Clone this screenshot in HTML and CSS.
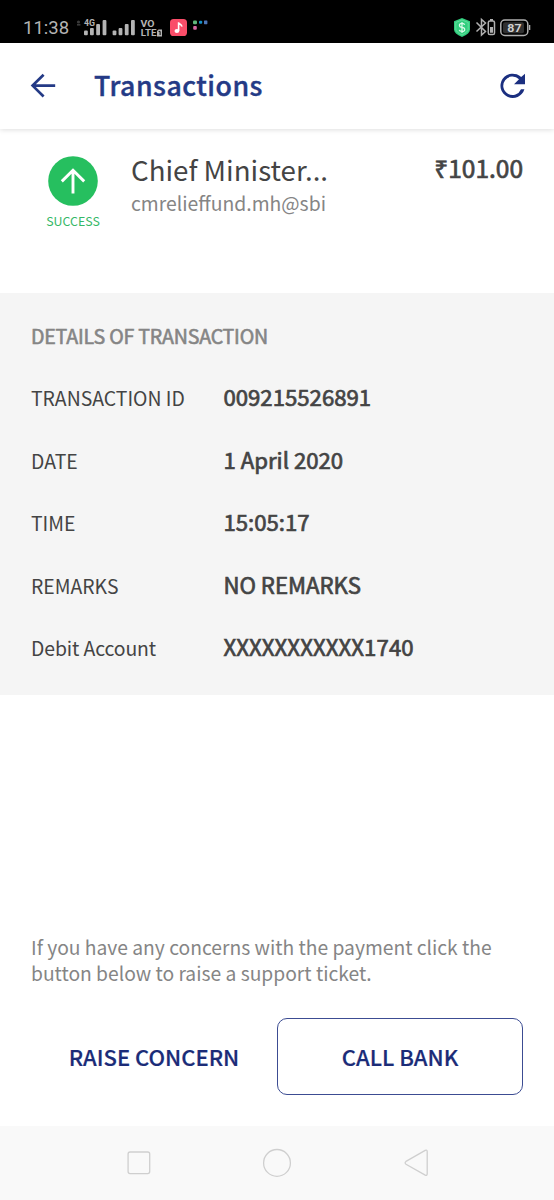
FILE: index.html
```html
<!DOCTYPE html>
<html lang="en">
<head>
<meta charset="utf-8">
<title>Transactions</title>
<link rel="stylesheet" href="styles.css">
</head>
<body>
<div class="screen">
  <div class="status-bar">
    <span class="clock">11:38</span>
    <svg class="status-left" width="140" height="30" viewBox="70 12 140 30">
      <g fill="#3a3a3a"><circle cx="78.5" cy="22" r="1.6"/><rect x="77" y="24" width="3.4" height="1.6"/></g>
      <g fill="#b4b4b4">
        <text class="tiny" x="84" y="26" font-size="8.8" textLength="11" lengthAdjust="spacingAndGlyphs">4G</text>
        <rect x="84" y="30.5" width="3.8" height="4.8" rx="1"/><rect x="90" y="28" width="3.8" height="7.3" rx="1"/><rect x="96.2" y="24" width="3.8" height="11.3" rx="1"/><rect x="102.6" y="20" width="3.8" height="15.3" rx="1"/>
        <rect x="112.6" y="30.5" width="3.8" height="4.8" rx="1"/><rect x="118.6" y="28" width="3.8" height="7.3" rx="1"/><rect x="124.8" y="24" width="3.8" height="11.3" rx="1"/><rect x="131" y="20" width="3.8" height="15.3" rx="1"/>
        <text class="tiny" x="140.6" y="27" font-size="9.4" textLength="14" lengthAdjust="spacingAndGlyphs">VO</text>
        <text class="tiny" x="140.8" y="36.4" font-size="9.4" textLength="15.6" lengthAdjust="spacingAndGlyphs">LTE</text>
        <path d="M158.5 29.5H162V36.5H157V31Z"/><path d="M158.6 31.4H160.1V35" fill="none" stroke="#000" stroke-width="1"/>
      </g>
      <rect x="170" y="19" width="17" height="17" rx="3.6" fill="#fa4d69"/>
      <ellipse cx="176.9" cy="31" rx="2.4" ry="1.9" fill="#fff"/>
      <path d="M178.6 31V22.3M178.6 23.1C180 24.6 182 24.4 181.8 26.6" fill="none" stroke="#fff" stroke-width="1.6"/>
      <rect x="193" y="20.4" width="4" height="3.8" rx="1.2" fill="#60b77b"/><rect x="199" y="20.8" width="3.2" height="3" rx="1" fill="#168fc8"/><rect x="204" y="20.4" width="3.4" height="3.8" rx=".6" fill="#4d75b8"/><rect x="193.2" y="26" width="3.6" height="3.7" rx="1" fill="#d668a2"/>
    </svg>
    <svg class="status-right" width="80" height="30" viewBox="452 12 80 30">
      <path d="M462 18L470 21.3V29.5Q470 33.5 462 37Q454 33.5 454 29.5V21.3Z" fill="#31cf7e"/>
      <path d="M462 20L468.2 22.5V29Q468.2 32 462 35Q455.8 32 455.8 29V22.5Z" fill="none" stroke="#78e3a9" stroke-width=".7"/>
      <path d="M464.7 24.8Q464.2 23.4 462 23.4Q459.4 23.4 459.4 25.3T462 27.4T464.7 29.5T462 31.4Q459.6 31.4 459.2 29.9M462 21.9V33" fill="none" stroke="#dcfbea" stroke-width="1.2"/>
      <g fill="none" stroke="#b0b0b0" stroke-width="1.5">
        <path d="M476.5 22.5L485.5 31.5L481.5 35V19.5L485.5 23L476.5 31.5"/>
        <rect x="488.3" y="21" width="6.2" height="13.5" rx="1.6"/>
        <rect x="500.8" y="20" width="27" height="15.4" rx="4"/>
      </g>
      <path d="M490 19H493V21H490ZM490 27H493V32.8H490ZM529 25H530.3V30H529Z" fill="#b0b0b0"/>
      <rect x="503" y="22.2" width="21" height="11" rx="2" fill="#303030"/>
      <text class="tiny" x="507.3" y="32" font-size="11.8" textLength="14.2" lengthAdjust="spacingAndGlyphs" fill="#d0d0d0">87</text>
    </svg>
  </div>

  <header class="app-bar">
    <svg class="back" width="26" height="26" viewBox="30 73 26 26"><path d="M55.2 85.6H32.6M43.6 74.7L32.6 85.6L43.6 96.5" fill="none" stroke="#243a86" stroke-width="2.7"/></svg>
    <h1 class="title">Transactions</h1>
    <svg class="refresh" width="26" height="26" viewBox="0 0 26 26"><path d="M21.2 4.1A12.2 12.2 0 1 0 24.4 16.2H21A9.2 9.2 0 1 1 19 6.3L14 11.3H25V.8Z" fill="#1b2f80"/></svg>
  </header>

  <section class="summary">
    <div class="status">
      <svg width="50" height="50" viewBox="0 0 50 50"><circle cx="25" cy="25" r="24.8" fill="#26bf5f"/><path d="M25 37.5V14M13.8 25.4L25 14.2L36.2 25.4" fill="none" stroke="#fff" stroke-width="2.9"/></svg>
      <span class="status-text">SUCCESS</span>
    </div>
    <div class="payee">
      <div class="payee-name">Chief Minister...</div>
      <div class="payee-id">cmrelieffund.mh@sbi</div>
    </div>
    <div class="amount">₹101.00</div>
  </section>

  <section class="details">
    <h2 class="details-title">DETAILS OF TRANSACTION</h2>
    <dl class="rows">
      <div class="row"><dt>TRANSACTION ID</dt><dd>009215526891</dd></div>
      <div class="row"><dt>DATE</dt><dd>1 April 2020</dd></div>
      <div class="row"><dt>TIME</dt><dd>15:05:17</dd></div>
      <div class="row"><dt>REMARKS</dt><dd>NO REMARKS</dd></div>
      <div class="row"><dt class="mixed">Debit Account</dt><dd class="account">XXXXXXXXXXX1740</dd></div>
    </dl>
  </section>

  <section class="support">
    <p class="note">If you have any concerns with the payment click the<br>button below to raise a support ticket.</p>
    <div class="actions">
      <button class="btn">RAISE CONCERN</button>
      <button class="btn outlined">CALL BANK</button>
    </div>
  </section>

  <nav class="nav-bar">
    <svg width="30" height="30" viewBox="0 0 30 30"><rect x="4.1" y="4" width="21.6" height="21.6" rx="2"/></svg>
    <svg width="30" height="30" viewBox="0 0 30 30"><circle cx="15" cy="14.9" r="13.4"/></svg>
    <svg width="30" height="30" viewBox="0 0 30 30"><path d="M24.2 2.4L5 13.4Q3.2 14.8 5 16.2L24.2 27.1Q26.2 27.8 26.2 25.8V3.7Q26.2 1.6 24.2 2.4Z"/></svg>
  </nav>
</div>
</body>
</html>
```

FILE: styles.css
```css
* { box-sizing: border-box; }
body, h1, h2, p, dl, dd { margin: 0; }
body { background: #fff; }
.screen {
  width: 554px;
  height: 1200px;
  display: flex;
  flex-direction: column;
  font-family: "Noto Sans CJK SC", "Noto Sans", sans-serif;
  color: #444;
  white-space: nowrap;
  overflow: hidden;
}
.status-bar {
  height: 43px;
  flex: none;
  background: #000;
  display: flex;
  align-items: flex-start;
  padding: 12px 22px 0 23px;
}
.clock {
  width: 47px;
  font: 18.5px/30px Roboto, sans-serif;
  padding-top: 1px;
  color: #b4b4b4;
}
.status-right { margin-left: auto; }
.tiny { font-family: Roboto, sans-serif; font-weight: 700; }

.app-bar {
  height: 86px;
  flex: none;
  display: flex;
  align-items: center;
  padding: 0 28px 0 30px;
  box-shadow: 0 1px 5px rgba(0, 0, 0, .13);
}
.title {
  margin-left: 38px;
  padding-bottom: 2px;
  font-size: 26.7px;
  line-height: 38px;
  font-weight: 500;
  letter-spacing: .5px;
  color: #243a86;
  -webkit-text-stroke: .4px #243a86;
}
.refresh { margin-left: auto; }

.summary {
  height: 164px;
  flex: none;
  display: flex;
  padding: 27px 31px 0 46px;
}
.status {
  width: 54px;
  display: flex;
  flex-direction: column;
  align-items: center;
}
.status-text {
  margin-top: 6px;
  font-size: 12.4px;
  line-height: 18px;
  color: #35b867;
}
.payee { margin-left: 31px; }
.payee-name { font-size: 27.7px; line-height: 26px; }
.payee-id { font-size: 19.35px; line-height: 30px; margin-top: 6px; color: #858585; }
.amount {
  margin-left: auto;
  font-size: 24.5px;
  line-height: 24px;
  -webkit-text-stroke: .7px #444;
}

.details {
  height: 402px;
  flex: none;
  background: #f5f5f5;
  padding: 28px 31px 0;
}
.details-title {
  font-size: 19.6px;
  line-height: 30px;
  font-weight: 400;
  letter-spacing: -.2px;
  color: #858585;
  -webkit-text-stroke: .6px #858585;
}
.rows {
  display: grid;
  grid-auto-rows: 30px;
  row-gap: 32.6px;
  margin-top: 30px;
}
.row {
  display: grid;
  grid-template-columns: 192.4px 1fr;
  align-items: baseline;
}
dt { font-size: 19.4px; line-height: 30px; }
.mixed { letter-spacing: -.1px; }
dd { font-size: 22.2px; line-height: 30px; -webkit-text-stroke: .7px #444; }
.account { letter-spacing: .08px; }

.support {
  flex: 1;
  display: flex;
  flex-direction: column;
  justify-content: flex-end;
  padding: 0 31px 31px;
}
.note { font-size: 19.25px; line-height: 26.7px; color: #858585; }
.actions {
  display: grid;
  grid-template-columns: 246px 246px;
  margin-top: 31px;
}
.btn {
  height: 77px;
  border: 0;
  border-radius: 10px;
  padding: 0 0 2px;
  background: none;
  font: 500 22px/30px "Noto Sans CJK SC", "Noto Sans", sans-serif;
  color: #1b2c78;
  -webkit-text-stroke: .2px #1b2c78;
}
.outlined { border: 1px solid #3c4c92; }

.nav-bar {
  height: 74px;
  flex: none;
  display: flex;
  justify-content: center;
  align-items: center;
  gap: 108.5px;
  background: #f9f9f9;
}
.nav-bar svg { fill: none; stroke: #cfcfcf; stroke-width: 1.3; }
```
